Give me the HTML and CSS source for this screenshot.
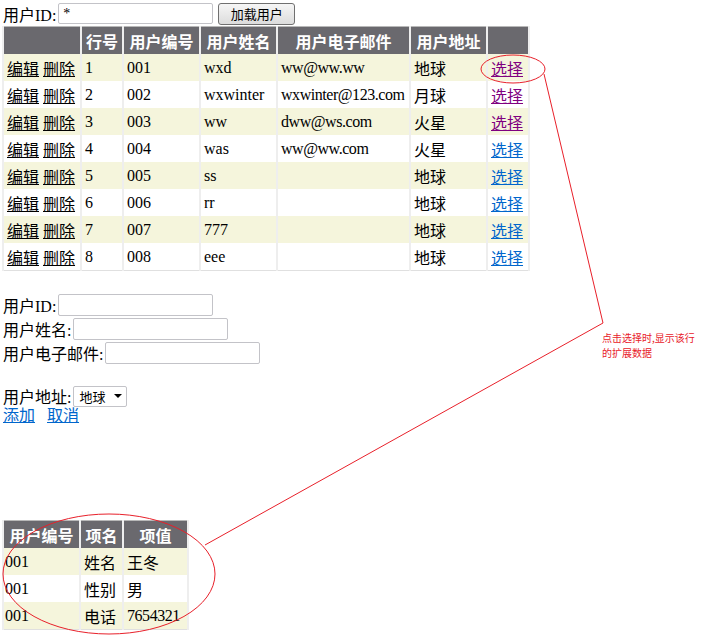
FILE: index.html
```html
<!DOCTYPE html>
<html lang="zh-CN">
<head>
    <meta charset="UTF-8">
    <title>用户管理</title>
    <link rel="stylesheet" href="styles.css">
</head>
<body>
    <div class="toolbar">
        <label>用户ID:</label>
        <input type="text" class="txt" value="*">
        <button class="btn">加载用户</button>
    </div>

    <table class="grid users">
        <colgroup>
            <col style="width:78px"><col style="width:42px"><col style="width:77px"><col style="width:77px">
            <col style="width:133px"><col style="width:77px"><col style="width:42px">
        </colgroup>
        <tr class="head">
            <th></th><th>行号</th><th>用户编号</th><th>用户姓名</th><th>用户电子邮件</th><th>用户地址</th><th></th>
        </tr>
        <tr class="alt">
            <td><a href="#">编辑</a> <a href="#">删除</a></td><td>1</td><td>001</td><td>wxd</td><td class="mail">ww@ww.ww</td><td>地球</td><td><a href="#" class="pick visited">选择</a></td>
        </tr>
        <tr>
            <td><a href="#">编辑</a> <a href="#">删除</a></td><td>2</td><td>002</td><td>wxwinter</td><td class="mail">wxwinter@123.com</td><td>月球</td><td><a href="#" class="pick visited">选择</a></td>
        </tr>
        <tr class="alt">
            <td><a href="#">编辑</a> <a href="#">删除</a></td><td>3</td><td>003</td><td>ww</td><td class="mail">dww@ws.com</td><td>火星</td><td><a href="#" class="pick visited">选择</a></td>
        </tr>
        <tr>
            <td><a href="#">编辑</a> <a href="#">删除</a></td><td>4</td><td>004</td><td>was</td><td class="mail">ww@ww.com</td><td>火星</td><td><a href="#" class="pick">选择</a></td>
        </tr>
        <tr class="alt">
            <td><a href="#">编辑</a> <a href="#">删除</a></td><td>5</td><td>005</td><td>ss</td><td></td><td>地球</td><td><a href="#" class="pick">选择</a></td>
        </tr>
        <tr>
            <td><a href="#">编辑</a> <a href="#">删除</a></td><td>6</td><td>006</td><td>rr</td><td></td><td>地球</td><td><a href="#" class="pick">选择</a></td>
        </tr>
        <tr class="alt">
            <td><a href="#">编辑</a> <a href="#">删除</a></td><td>7</td><td>007</td><td>777</td><td></td><td>地球</td><td><a href="#" class="pick">选择</a></td>
        </tr>
        <tr>
            <td><a href="#">编辑</a> <a href="#">删除</a></td><td>8</td><td>008</td><td>eee</td><td></td><td>地球</td><td><a href="#" class="pick">选择</a></td>
        </tr>
    </table>

    <div class="edit-form">
        <div class="field"><label>用户ID:</label><input type="text" class="txt"></div>
        <div class="field"><label>用户姓名:</label><input type="text" class="txt"></div>
        <div class="field"><label>用户电子邮件:</label><input type="text" class="txt"></div>
        <div class="field addr">
            <label>用户地址:</label>
            <span class="select">地球<span class="arrow"></span></span>
        </div>
        <div class="actions"><a href="#">添加</a><a href="#">取消</a></div>
    </div>

    <table class="grid ext">
        <colgroup>
            <col style="width:77px"><col style="width:43px"><col style="width:65px">
        </colgroup>
        <tr class="head"><th>用户编号</th><th>项名</th><th>项值</th></tr>
        <tr class="alt"><td class="flush">001</td><td>姓名</td><td>王冬</td></tr>
        <tr><td class="flush">001</td><td>性别</td><td>男</td></tr>
        <tr class="alt"><td class="flush">001</td><td>电话</td><td class="mail">7654321</td></tr>
    </table>

    <!-- 标注 -->
    <svg class="note" width="710" height="637" viewBox="0 0 710 637">
        <ellipse cx="513" cy="69" rx="32" ry="14" fill="none" stroke="#e8202a" stroke-width="1"/>
        <polyline points="544,74 603,323 205,545" fill="none" stroke="#e8202a" stroke-width="1"/>
        <ellipse cx="109" cy="574" rx="106" ry="60" fill="none" stroke="#e8202a" stroke-width="1"/>
        <text x="602" y="342" class="note-text">点击选择时,显示该行</text>
        <text x="602" y="357" class="note-text">的扩展数据</text>
    </svg>
</body>
</html>
```

FILE: styles.css
```css
body {
    margin: 2px 2px;
    font-family: 'Liberation Serif', 'Noto Sans CJK SC', serif;
    font-size: 16px;
    color: #000;
    position: relative;
    width: 706px;
    height: 633px;
}

label {
    font-family: 'Liberation Serif', 'Noto Sans CJK SC', serif;
}

.toolbar {
    display: flex;
    align-items: center;
    height: 23px;
    padding-left: 1px;
}

.txt {
    box-sizing: border-box;
    width: 155px;
    height: 21px;
    border: 1px solid #c3c3c8;
    border-radius: 2px;
    padding: 0 4px;
    font-family: 'Liberation Serif', serif;
    font-size: 14px;
    margin-left: 2px;
}

.btn {
    box-sizing: border-box;
    margin-left: 5px;
    height: 22px;
    width: 77px;
    border: 1px solid #707070;
    border-radius: 3px;
    background: linear-gradient(#f6f6f6, #dcdcdc);
    font-family: 'Noto Sans CJK SC', sans-serif;
    font-size: 13px;
    padding: 0;
    line-height: 18px;
}

.grid {
    border-collapse: collapse;
    border: 1px solid #b8b8b8;
    table-layout: fixed;
}

.users {
    margin-top: 1px;
    width: 527px;
}

.grid th {
    background: #6a696e;
    color: #fff;
    font-family: 'Noto Sans CJK SC', sans-serif;
    font-weight: bold;
    height: 27px;
    padding: 0 3px;
    border: 2px solid #eee;
    border-top: 1px solid #b8b8b8;
    border-bottom: 0;
    white-space: nowrap;
    font-size: 16px;
}

.grid td {
    height: 27px;
    padding: 0 3px;
    border: 2px solid #eee;
    border-bottom: 0;
    border-top: 0;
    white-space: nowrap;
    overflow: hidden;
}

.grid td.mail {
    padding-left: 3px;
    letter-spacing: -0.45px;
}

.grid tr.alt td {
    background: #f5f5dc;
}

.grid tr:last-child td {
    border-bottom: 1px solid #e0e0e0;
}

.grid td a {
    color: #000;
}

.grid td a.pick {
    color: #0066cc;
}

.grid td a.pick.visited {
    color: #800080;
}

.edit-form {
    margin-top: 22px;
    padding-left: 1px;
}

.field {
    display: flex;
    align-items: center;
    height: 24px;
}

.field .txt {
    height: 22px;
}

.field.addr {
    margin-top: 20px;
    height: 22px;
}

.select {
    box-sizing: border-box;
    display: inline-flex;
    align-items: center;
    justify-content: space-between;
    width: 54px;
    height: 21px;
    margin-left: 2px;
    border: 1px solid #c3c3c8;
    border-radius: 2px;
    padding: 0 4px 0 5px;
    font-family: 'Noto Sans CJK SC', sans-serif;
    font-size: 13px;
}

.arrow {
    width: 0;
    height: 0;
    border-left: 4px solid transparent;
    border-right: 4px solid transparent;
    border-top: 4px solid #000;
}

.actions {
    height: 20px;
    line-height: 18px;
}

.actions a {
    color: #0066cc;
    margin-right: 12px;
}

.ext {
    margin-top: 93px;
    width: 186px;
}

.ext td.flush {
    padding-left: 1px;
}

.note {
    position: absolute;
    left: -2px;
    top: -2px;
    pointer-events: none;
}

.note-text {
    fill: #e8202a;
    font-family: 'Noto Sans CJK SC', sans-serif;
    font-size: 10px;
}
```
